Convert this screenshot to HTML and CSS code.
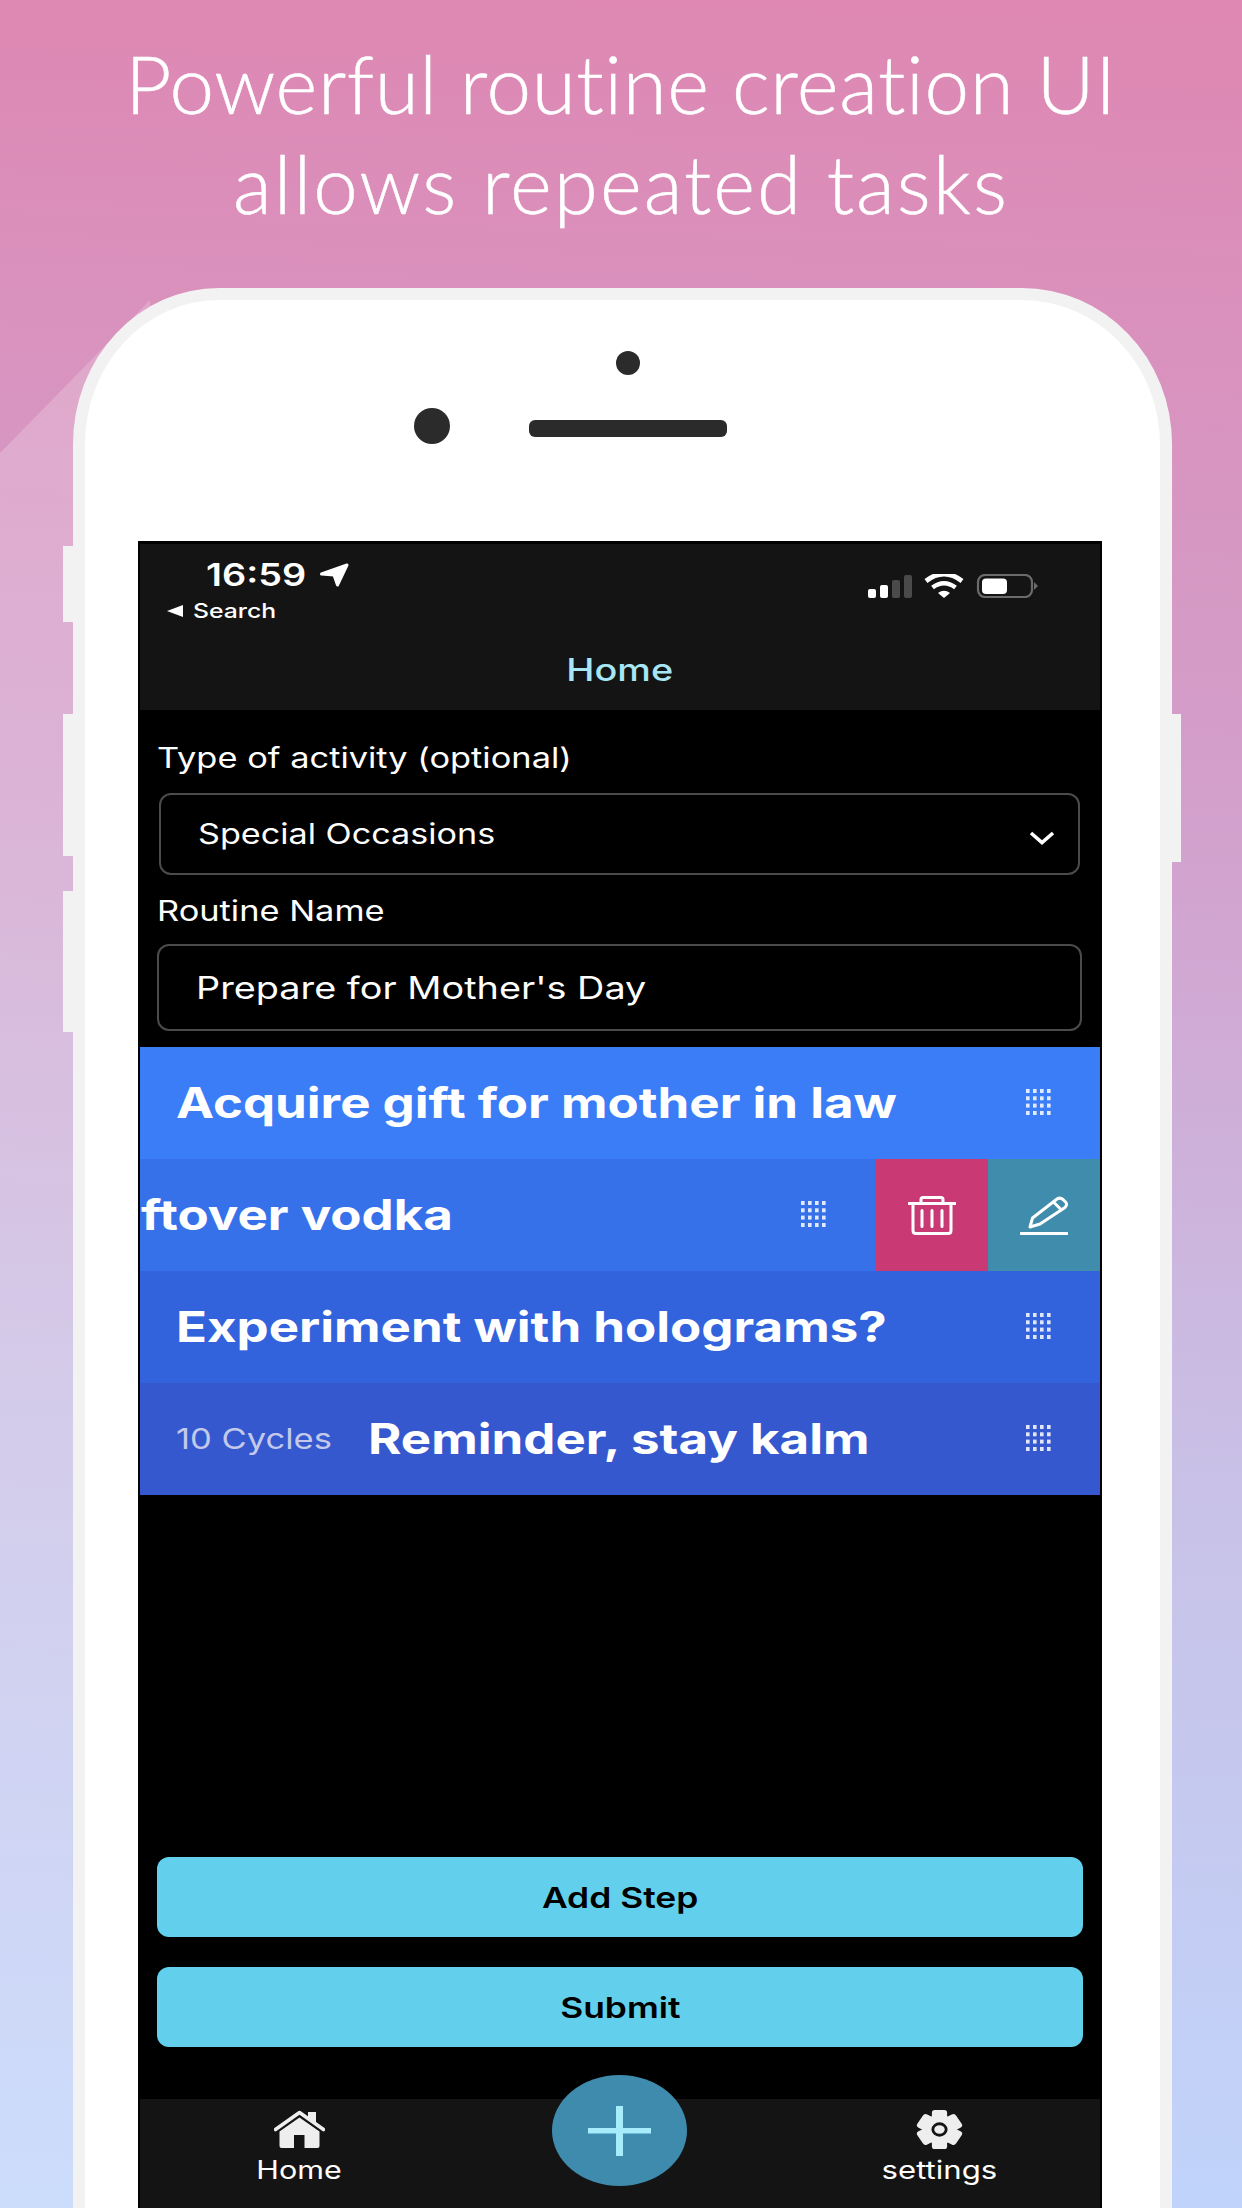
FILE: index.html
```html
<!DOCTYPE html>
<html lang="en">
<head>
<meta charset="utf-8">
<title>Routine creation</title>
<link rel="stylesheet" href="styles.css">
</head>
<body>
<div class="canvas">
  <div class="sheen"></div>
  <h1 class="headline"><span class="line-a">Powerful routine creation UI</span><br><span class="line-b">allows repeated tasks</span></h1>
  <div class="phone">
    <span class="side-btn side-a"></span>
    <span class="side-btn side-b"></span>
    <span class="side-btn side-c"></span>
    <span class="side-btn side-d"></span>
    <div class="phone-top">
      <div class="front-dot"></div>
      <div class="front-row"><div class="front-cam"></div><div class="front-speaker"></div></div>
    </div>
    <div class="screen">
      <header class="app-head">
        <div class="status">
          <div class="status-left">
            <div class="clock"><span class="tx tx-clock">16:59</span>
              <svg class="loc" viewBox="0 0 30 24"><path d="M2.500 11 28 2 18.500 22 15 12Z" fill="#fff" stroke="#fff" stroke-width="3" stroke-linejoin="round"/></svg>
            </div>
            <div class="back"><svg class="back-tri" viewBox="0 0 16 12"><path d="M0 6 16 0V12Z" fill="#fff"/></svg><span class="tx tx-search">Search</span></div>
          </div>
          <svg class="status-icons" viewBox="869 574 178 24">
            <rect x="869" y="589" width="8" height="9" rx="2" fill="#fff"/>
            <rect x="881" y="585" width="8" height="13" rx="2" fill="#fff"/>
            <rect x="893" y="580" width="8" height="18" rx="2" fill="#4a4a4a"/>
            <rect x="905" y="575" width="8" height="23" rx="2" fill="#4a4a4a"/>
            <path d="M927 581Q945 567 963 581" fill="none" stroke="#fff" stroke-width="4.800"/>
            <path d="M933.500 587.500Q945 579 956.500 587.500" fill="none" stroke="#fff" stroke-width="4.600"/>
            <path d="M939 593 945 598 951 593Q945 588.500 939 593Z" fill="#fff"/>
            <rect x="979" y="575" width="54" height="22" rx="7" fill="none" stroke="#6b6b6b" stroke-width="2.200"/>
            <rect x="983" y="578.500" width="25" height="15.500" rx="4" fill="#fff"/>
            <path d="M1035 582 1039 586 1035 590Z" fill="#6b6b6b"/>
          </svg>
        </div>
        <div class="app-title"><span class="tx tx-mid">Home</span></div>
      </header>
      <label class="field-label field-label-a"><span class="tx">Type of activity (optional)</span></label>
      <div class="select-box">
        <span class="tx">Special Occasions</span>
        <svg class="chev" viewBox="0 0 26 14"><path d="M2 2 13 11.500 24 2" fill="none" stroke="#fff" stroke-width="3.600"/></svg>
      </div>
      <label class="field-label field-label-b"><span class="tx">Routine Name</span></label>
      <div class="input-box"><span class="tx">Prepare for Mother's Day</span></div>
      <ul class="steps">
        <li class="step step-1"><span class="tx tx-step">Acquire gift for mother in law</span>
          <svg class="grip" viewBox="0 0 25 26"><use href="#dots"/></svg></li>
        <li class="step step-2"><span class="tx tx-step">ftover vodka</span>
          <svg class="grip grip-shift" viewBox="0 0 25 26"><use href="#dots"/></svg>
          <div class="action action-del">
            <svg class="act-ico" viewBox="0 0 48 38" fill="none" stroke="#fff" stroke-width="3" stroke-linecap="round" stroke-linejoin="round">
              <path d="M1 7H47M13 7V3Q13 1 15 1H33Q35 1 35 3V7M5 7V34Q5 37 8 37H40Q43 37 43 34V7M14 14V30M24 14V30M34 14V30"/>
            </svg>
          </div>
          <div class="action action-edit">
            <svg class="act-ico" viewBox="0 0 48 39" fill="none" stroke="#fff" stroke-width="3" stroke-linecap="round" stroke-linejoin="round">
              <path d="M1 37.500H47M10 31 12.500 22 37 3Q40 1 43 3.500L46 6.500Q47.500 9 45 11.500L20 28ZM33.500 6 41.500 14"/>
            </svg>
          </div>
        </li>
        <li class="step step-3"><span class="tx tx-step">Experiment with holograms?</span>
          <svg class="grip" viewBox="0 0 25 26"><use href="#dots"/></svg></li>
        <li class="step step-4"><span class="tx tx-cycles">10 Cycles</span><span class="tx tx-step">Reminder, stay kalm</span>
          <svg class="grip" viewBox="0 0 25 26"><use href="#dots"/></svg></li>
      </ul>
      <div class="actions-col">
        <button class="cta"><span class="tx tx-mid">Add Step</span></button>
        <button class="cta"><span class="tx tx-mid">Submit</span></button>
      </div>
      <nav class="tabbar">
        <div class="tab">
          <svg class="tab-ico" viewBox="0 0 51 39">
            <path d="M34 2H42V13.500L34 8Z" fill="#eeeeee"/>
            <path d="M1.500 19.500 25.500 2.500 49.500 19.500" fill="none" stroke="#eeeeee" stroke-width="3.600" stroke-linecap="round" stroke-linejoin="round"/>
            <path d="M5.500 21.500 25.500 7.500 45.500 21.500V36Q45.500 38 43.500 38H30.500V25H20V38H7.500Q5.500 38 5.500 36Z" fill="#eeeeee"/>
          </svg>
          <span class="tx tx-mid tab-label">Home</span>
        </div>
        <div class="tab">
          <svg class="tab-ico" viewBox="0 0 47 41">
            <g fill="#eeeeee"><ellipse cx="23.500" cy="20.500" rx="17.500" ry="15.500"/>
            <rect x="15.500" y="0" width="16" height="41" rx="3"/>
            <rect x="15.500" y="0" width="16" height="41" rx="3" transform="translate(23.500 20.500) scale(1.150 1) rotate(60) translate(-23.500 -20.500)"/>
            <rect x="15.500" y="0" width="16" height="41" rx="3" transform="translate(23.500 20.500) scale(1.150 1) rotate(-60) translate(-23.500 -20.500)"/></g>
            <ellipse cx="23.500" cy="20.500" rx="7" ry="6" fill="#eeeeee" stroke="#141414" stroke-width="3"/>
          </svg>
          <span class="tx tx-mid tab-label tab-label-wide">settings</span>
        </div>
        <div class="fab">
          <svg class="fab-plus" viewBox="0 0 63 50"><path d="M28 0H35V22H63V27.500H35V50H28V27.500H0V22H28Z" fill="#a6ecfa"/></svg>
        </div>
      </nav>
    </div>
  </div>
</div>
<svg class="defs" width="0" height="0">
  <defs>
    <g id="dots" fill="#fff" fill-opacity=".85">
      <rect x="0" y="0" width="3.600" height="4"/><rect x="7" y="0" width="3.600" height="4"/><rect x="14" y="0" width="3.600" height="4"/><rect x="21" y="0" width="3.600" height="4"/>
      <rect x="0" y="7.300" width="3.600" height="4"/><rect x="7" y="7.300" width="3.600" height="4"/><rect x="14" y="7.300" width="3.600" height="4"/><rect x="21" y="7.300" width="3.600" height="4"/>
      <rect x="0" y="14.600" width="3.600" height="4"/><rect x="7" y="14.600" width="3.600" height="4"/><rect x="14" y="14.600" width="3.600" height="4"/><rect x="21" y="14.600" width="3.600" height="4"/>
      <rect x="0" y="22" width="3.600" height="4"/><rect x="7" y="22" width="3.600" height="4"/><rect x="14" y="22" width="3.600" height="4"/><rect x="21" y="22" width="3.600" height="4"/>
    </g>
  </defs>
</svg>
</body>
</html>
```
FILE: styles.css
```css
* { box-sizing: border-box; }
html, body { margin: 0; padding: 0; }
body { font-family: Inter, "Liberation Sans", sans-serif; }
.defs { position: absolute; }
.canvas {
  position: relative; width: 1242px; height: 2208px; overflow: hidden;
  background: linear-gradient(182deg, #de87b2 0%, #d39fcb 35%, #c9c0e6 65%, #c0d5fc 100%);
}
.sheen {
  position: absolute; inset: 0; background: rgba(255,255,255,.2);
  clip-path: polygon(0 453px, 150px 300px, 150px 2208px, 0 2208px);
}
.headline {
  position: relative; margin: 0; height: 288px; padding-top: 33px;
  font-family: Lato, sans-serif; font-weight: 300; font-size: 80px; line-height: 100px;
  color: #fff; text-align: center; -webkit-text-stroke: .5px #fff;
}
.line-a { letter-spacing: .6px; }
.line-b { letter-spacing: 2px; }
.phone {
  position: relative; margin-left: 73px; width: 1099px; height: 1920px;
  background: #fff; border: 12px solid #f2f2f2; border-bottom: 0;
  border-radius: 146px 150px 0 0 / 156px 156px 0 0;
}
.side-btn { position: absolute; background: #f2f2f2; width: 10px; }
.side-a { left: -22px; top: 246px; height: 76px; }
.side-b { left: -22px; top: 414px; height: 142px; }
.side-c { left: -22px; top: 591px; height: 141px; }
.side-d { right: -21px; top: 414px; height: 148px; }
.phone-top { height: 241px; padding-top: 51px; }
.front-dot { width: 24px; height: 24px; border-radius: 50%; background: #2b2b2b; margin-left: 531px; }
.front-row { display: flex; align-items: center; margin: 33px 0 0 329px; gap: 79px; }
.front-cam { width: 36px; height: 36px; border-radius: 50%; background: #2b2b2b; }
.front-speaker { width: 198px; height: 17px; border-radius: 6px; background: #2b2b2b; margin-top: 5px; }

.screen {
  width: 964px; height: 1667px; margin-left: 53px; background: #000;
  padding: 3px 2px 0; display: flex; flex-direction: column; color: #fff; position: relative;
}
.tx { display: inline-block; transform: scaleX(1.22); transform-origin: left center; white-space: nowrap; }
.tx-mid { transform-origin: center center; }

.app-head { height: 166px; background: #141414; flex: none; }
.status { display: flex; justify-content: space-between; height: 78px; }
.status-left { padding-top: 16px; }
.clock { display: flex; align-items: center; height: 30px; padding-left: 66px; }
.tx-clock { font-size: 31px; font-weight: 600; line-height: 30px; width: 96px; }
.loc { width: 30px; height: 24px; margin-left: 17px; }
.back { display: flex; align-items: center; height: 22px; margin-top: 10px; padding-left: 27px; }
.back-tri { width: 16px; height: 12px; margin-right: 10px; }
.tx-search { font-size: 20.300px; font-weight: 500; line-height: 22px; }
.status-icons { width: 178px; height: 24px; margin: 30px 54px 0 0; }
.app-title { height: 30px; margin-top: 33px; text-align: center; font-size: 31px; line-height: 30px; font-weight: 500; color: #a6e6f5; }

.field-label { display: block; padding-left: 17px; font-size: 28.200px; line-height: 34px; flex: none; }
.field-label-a { margin-top: 31px; }
.field-label-b { margin-top: 19px; }
.select-box, .input-box {
  flex: none; display: flex; align-items: center; border: 2px solid #4b4b4b; border-radius: 12px;
  position: relative;
}
.select-box { width: 921px; height: 82px; margin: 18px 0 0 19px; padding-left: 37px; font-size: 28px; }
.chev { position: absolute; right: 23px; top: 36px; width: 26px; height: 14px; }
.input-box { width: 925px; height: 87px; margin: 16px 0 0 17px; padding-left: 37px; font-size: 31px; }

.steps { list-style: none; margin: 16px 0 0; padding: 0; flex: none; }
.step { display: flex; align-items: center; height: 112px; padding-left: 36px; position: relative; overflow: hidden; }
.step-1 { background: #3a7df7; }
.step-2 { background: #3671ea; padding-left: 1px; }
.step-3 { background: #3262dc; }
.step-4 { background: #3558cf; }
.tx-step { font-size: 41.800px; font-weight: 700; line-height: 50px; }
.tx-cycles { font-size: 28.300px; color: #c3c9ea; width: 192px; }
.grip { position: absolute; right: 49px; top: 42px; width: 25px; height: 26px; }
.grip-shift { right: 274px; }
.action { position: absolute; top: 0; bottom: 0; width: 112px; display: flex; align-items: center; justify-content: center; }
.action-del { right: 112px; background: #c93a74; }
.action-edit { right: 0; background: #408cad; }
.act-ico { width: 48px; height: 39px; }

.actions-col { margin-top: auto; display: flex; flex-direction: column; gap: 30px; padding: 0 0 0 17px; flex: none; }
.cta {
  width: 926px; height: 80px; background: #62d0ec; border: 0; border-radius: 12px; padding: 0;
  font-family: Inter, sans-serif; font-size: 29px; font-weight: 600; color: #000;
}
.tabbar {
  flex: none; height: 109px; margin-top: 52px; background: #141414; position: relative;
  display: flex; justify-content: space-between; padding: 11px 101px 0 99px;
}
.tab { width: 120px; display: flex; flex-direction: column; align-items: center; }
.tab-ico { width: 51px; height: 39px; }
.tab-label { font-size: 25px; line-height: 24px; margin-top: 9px; }
.tab-label-wide { font-size: 25.500px; }
.fab {
  position: absolute; left: 412px; top: -24px; width: 135px; height: 111px; border-radius: 50%;
  background: #3f8bad; display: flex; align-items: center; justify-content: center;
}
.fab-plus { width: 63px; height: 50px; }
```
